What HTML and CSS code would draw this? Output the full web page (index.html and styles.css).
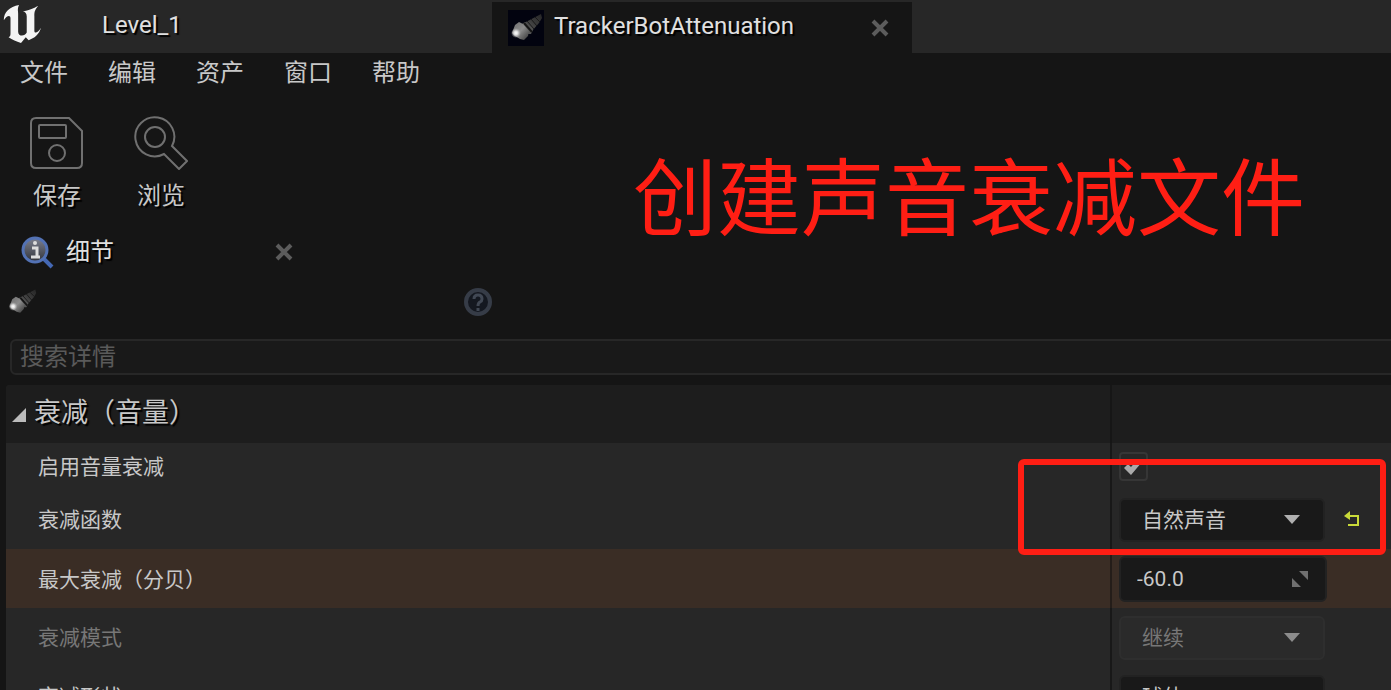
FILE: index.html
```html
<!DOCTYPE html>
<html lang="zh-CN">
<head>
  <meta charset="UTF-8">
  <title>TrackerBotAttenuation</title>
  <link rel="stylesheet" href="styles.css">
</head>
<body>
  <svg class="defs" aria-hidden="true">
    <defs>
      <linearGradient id="metal" x1="0" y1="1" x2="1" y2="0">
        <stop offset="0" stop-color="#606060"/>
        <stop offset="0.5" stop-color="#3c3c3c"/>
        <stop offset="1" stop-color="#262626"/>
      </linearGradient>
      <linearGradient id="flange" x1="0" y1="0" x2="1" y2="1">
        <stop offset="0" stop-color="#6c6c6c"/>
        <stop offset="0.5" stop-color="#8c8c8c"/>
        <stop offset="1" stop-color="#333"/>
      </linearGradient>
      <radialGradient id="glow">
        <stop offset="0" stop-color="#fff"/>
        <stop offset="0.4" stop-color="#ddd"/>
        <stop offset="1" stop-color="#aaa" stop-opacity="0"/>
      </radialGradient>
      <linearGradient id="lens" x1="0" y1="0" x2="0" y2="1">
        <stop offset="0" stop-color="#7d8190"/>
        <stop offset="1" stop-color="#303238"/>
      </linearGradient>
      <symbol id="cone" viewBox="0 0 36 36">
        <path d="M16 13L33 4L34 8L31 13L24 21Z" fill="url(#metal)"/>
        <path d="M19 11L26 19M23 9L29 16M27 7L32 12" stroke="#181818" stroke-width="1"/>
        <path d="M14 14L17 12L25 20L23 24L19 24Z" fill="#555"/>
        <path d="M16 13L24 22" stroke="#151515" stroke-width="2"/>
        <path d="M7 15L11 12L15 14L21 21L20 26L16 30L12 29L7 26L4 23Z" fill="url(#flange)"/>
        <circle cx="8" cy="23" r="5" fill="url(#glow)"/>
      </symbol>
      <symbol id="cross" viewBox="0 0 18 18">
        <path d="M2 2L16 16M16 2L2 16" fill="none" stroke="#5c5c5c" stroke-width="4"/>
      </symbol>
    </defs>
  </svg>

  <header class="tabs">
    <svg class="logo" viewBox="0 2 44 44" aria-hidden="true">
      <path d="M4 20C4 11 10 6 20 4C18 8 19 10 19 13V32C19 35 21 36 23 36C25 36 27 35 28 33V16C28 13 26 11 24 11C30 10 35 8 40 5C36 10 36 12 36 16V31C36 34 39 34 43 28C41 35 36 39 30 41L27 38L22 44C17 42 13 41 9 38C11 37 11 36 11 33V18C11 14 7 15 4 20Z" fill="#f4f4f4"/>
    </svg>
    <button class="tab level-tab">Level_1</button>
    <div class="tab asset-tab">
      <svg class="thumb" aria-hidden="true"><use href="#cone"/></svg>
      <span class="tab-name">TrackerBotAttenuation</span>
      <button class="close" aria-label="关闭"><svg><use href="#cross"/></svg></button>
    </div>
  </header>

  <nav class="menu">
    <button>文件</button>
    <button>编辑</button>
    <button>资产</button>
    <button>窗口</button>
    <button>帮助</button>
  </nav>

  <div class="toolbar">
    <button>
      <svg viewBox="0 0 54 54" aria-hidden="true">
        <path d="M6 2H39L52 15V47Q52 52 47 52H6Q1 52 1 47V7Q1 2 6 2Z"/>
        <rect x="9" y="9" width="27" height="13" rx="1"/>
        <circle cx="27" cy="37" r="8"/>
      </svg>
      保存
    </button>
    <button>
      <svg viewBox="0 0 54 54" aria-hidden="true">
        <path d="M30 38A19.500 19.500 0 1 1 38 30L53 45L45 53Z"/>
        <circle cx="21" cy="21" r="10"/>
      </svg>
      浏览
    </button>
  </div>

  <div class="details-tab">
    <svg class="details-icon" viewBox="0 0 34 34" aria-hidden="true">
      <path d="M23 23L32 32" stroke="#4468b4" stroke-width="4"/>
      <circle cx="15" cy="15" r="12" fill="url(#lens)" stroke="#5372b4" stroke-width="3"/>
      <path d="M12 13H17V21M11 22H20" fill="none" stroke="#ddd" stroke-width="3"/>
      <circle cx="15" cy="8" r="2" fill="#ddd"/>
    </svg>
    <span>细节</span>
    <button class="close" aria-label="关闭"><svg><use href="#cross"/></svg></button>
  </div>

  <div class="object-row">
    <svg class="object-icon" aria-hidden="true"><use href="#cone"/></svg>
    <button class="help" aria-label="帮助">
      <svg viewBox="0 0 30 30">
        <circle cx="15" cy="15" r="12" fill="#141820" stroke="#363c47" stroke-width="4"/>
        <path d="M11 12Q11 8 15 8Q19 8 19 12Q19 14 17 15Q15 16 15 19M15 21V24" fill="none" stroke="#414854" stroke-width="3"/>
      </svg>
    </button>
  </div>

  <input class="search" type="search" placeholder="搜索详情" aria-label="搜索详情">

  <main class="panel">
    <h2 class="category">
      <button>
        <svg viewBox="0 0 16 16" aria-hidden="true"><path d="M15 1V15H1Z" fill="#bbb"/></svg>
        <span>衰减<span class="paren" lang="zh-TW">（</span>音量<span class="paren" lang="zh-TW">）</span></span>
      </button>
    </h2>
    <div class="row short">
      <label for="enable">启用音量衰减</label>
      <div class="value">
        <span class="check">
          <input type="checkbox" id="enable" checked>
          <svg viewBox="0 0 28 28" aria-hidden="true"><path d="M5 15L9 11L12 14L19 6L23 9L12 22Z" fill="#aaa"/></svg>
        </span>
      </div>
    </div>
    <div class="row">
      <label for="function">衰减函数</label>
      <div class="value">
        <span class="combo"><select id="function"><option>自然声音</option></select></span>
        <button class="reset" aria-label="重置">
          <svg viewBox="0 0 18 18"><path d="M7 0L1 5L7 9Z" fill="#c8d939"/><path d="M4 5H15V14H5" fill="none" stroke="#c8d939" stroke-width="2"/></svg>
        </button>
      </div>
      <div class="highlight"></div>
    </div>
    <div class="row changed">
      <label for="max">最大衰减<span class="paren" lang="zh-TW">（</span>分贝<span class="paren" lang="zh-TW">）</span></label>
      <div class="value">
        <span class="spin">
          <input type="text" id="max" value="-60.0">
          <svg viewBox="0 0 18 18" aria-hidden="true"><path d="M8 1H17V10ZM1 8V17H10Z" fill="#707070"/></svg>
        </span>
      </div>
    </div>
    <div class="row off">
      <label for="mode">衰减模式</label>
      <div class="value">
        <span class="combo"><select id="mode" disabled><option>继续</option></select></span>
      </div>
    </div>
    <div class="row">
      <label for="shape">衰减形状</label>
      <div class="value">
        <span class="combo"><select id="shape"><option>球体</option></select></span>
      </div>
    </div>
  </main>

  <div class="note">创建声音衰减文件</div>
</body>
</html>
```
FILE: styles.css
```css
* {
  box-sizing: border-box;
}
body {
  margin: 0;
  height: 100vh;
  overflow: hidden;
  position: relative;
  background: #151515;
  color: #c8c8c8;
  font-family: Roboto, "Noto Sans CJK SC", sans-serif;
  font-size: 24px;
  line-height: 32px;
}
button, input, select {
  margin: 0;
  padding: 0;
  border: none;
  background: none;
  color: inherit;
  font: inherit;
}
svg {
  display: block;
  flex: none;
}
.defs {
  position: absolute;
  width: 0;
  height: 0;
}
.tabs {
  display: flex;
  height: 53px;
  padding-top: 2px;
  background: #272727;
}
.logo {
  width: 42px;
  height: 44px;
}
.tab {
  color: #e0e0e0;
  text-shadow: 2px 2px 1px #000;
}
.level-tab {
  width: 450px;
  padding: 0 0 5px 60px;
  text-align: left;
}
.asset-tab {
  display: flex;
  align-items: center;
  width: 420px;
  padding: 0 23px 0 16px;
  background: #151515;
}
.thumb {
  width: 36px;
  height: 36px;
  background: #02030f;
}
.tab-name {
  margin-left: 10px;
  padding-bottom: 3px;
}
.close {
  margin-left: auto;
}
.close svg {
  width: 18px;
  height: 18px;
}
.menu {
  display: flex;
  gap: 40px;
  height: 40px;
  padding: 0 20px;
}
.toolbar {
  display: flex;
  padding: 23px 5px 0;
}
.toolbar button {
  display: flex;
  flex-direction: column;
  align-items: center;
  gap: 10px;
  width: 104px;
  text-shadow: 2px 2px 1px #000;
}
.toolbar svg {
  width: 54px;
  height: 54px;
  fill: none;
  stroke: #707070;
  stroke-width: 2;
}
.details-tab {
  display: flex;
  align-items: center;
  width: 293px;
  height: 38px;
  margin-top: 21px;
  padding-left: 20px;
  color: #e0e0e0;
  text-shadow: 2px 2px 1px #000;
}
.details-icon {
  width: 34px;
  height: 34px;
  margin-right: 12px;
}
.object-row {
  display: flex;
  align-items: center;
  justify-content: space-between;
  width: 493px;
  height: 61px;
  padding-left: 6px;
}
.object-icon {
  width: 32px;
  height: 32px;
}
.help svg {
  width: 30px;
  height: 30px;
}
.search {
  display: block;
  width: 100%;
  height: 36px;
  margin: 7px 0 10px 10px;
  padding: 0 8px;
  border: 2px solid #272727;
  border-radius: 6px;
  background: #191919;
}
.search::placeholder {
  color: #5a5a5a;
}
.panel {
  margin-left: 6px;
  border-radius: 4px 0 0 0;
  background:
    linear-gradient(#181818, #181818) right 279px top / 2px 100% no-repeat,
    #272727;
}
.category {
  height: 58px;
  margin: 0;
  padding-right: 279px;
  border-radius: 4px 0 0 0;
  background: #1d1d1d;
  font-size: 27px;
  font-weight: normal;
}
.category button {
  display: flex;
  align-items: center;
  gap: 7px;
  width: 100%;
  height: 58px;
  padding: 0 0 4px 5px;
  border-right: 2px solid #161616;
  text-shadow: 2px 2px 1px #000;
}
.category svg {
  width: 16px;
  height: 16px;
  margin-top: 6px;
}
.paren {
  font-family: "Noto Sans CJK TC", sans-serif;
}
.row {
  display: grid;
  grid-template-columns: 1fr 272px;
  align-items: center;
  position: relative;
  height: 59px;
  padding-left: 32px;
  font-size: 21px;
}
.short {
  height: 47px;
}
.changed {
  background:
    linear-gradient(#241d19, #241d19) right 279px top / 2px 100% no-repeat,
    #3a2d25;
}
.off {
  color: #777;
}
.value {
  display: flex;
  align-items: center;
}
.check, .combo, .spin {
  display: grid;
  align-items: center;
}
.check > *, .spin > * {
  grid-area: 1 / 1;
}
.check input {
  appearance: none;
  width: 29px;
  height: 29px;
  border: 2px solid #363636;
  border-radius: 4px;
}
.check svg {
  width: 28px;
  height: 28px;
  pointer-events: none;
}
.combo {
  width: 206px;
}
.combo::after {
  content: "";
  grid-area: 1 / 1;
  justify-self: end;
  width: 16px;
  height: 9px;
  margin-right: 25px;
  background: #b0b0b0;
  clip-path: polygon(0 0, 100% 0, 50% 100%);
  pointer-events: none;
}
.combo select {
  grid-area: 1 / 1;
  appearance: none;
  height: 44px;
  padding-left: 21px;
  border: 2px solid #222;
  border-radius: 6px;
  background: #191919;
}
.combo select:disabled {
  border-color: #2e2e2e;
  background: #2a2a2a;
  opacity: 1;
}
.off .combo::after {
  background: #8c8c8c;
}
.spin {
  width: 208px;
}
.spin input {
  width: 100%;
  height: 46px;
  padding-left: 16px;
  border: 2px solid #222;
  border-radius: 6px;
  background: #191919;
}
.spin svg {
  justify-self: end;
  width: 18px;
  height: 18px;
  margin-right: 18px;
}
.reset {
  margin-left: 18px;
}
.reset svg {
  width: 18px;
  height: 18px;
}
.highlight {
  position: absolute;
  z-index: 1;
  top: -31px;
  right: 5px;
  width: 368px;
  height: 96px;
  border: 6px solid #ff1e14;
  border-radius: 6px;
  pointer-events: none;
}
.note {
  position: absolute;
  top: 151px;
  right: 86px;
  color: #ff1e14;
  font-size: 84px;
  line-height: 100px;
}
```
